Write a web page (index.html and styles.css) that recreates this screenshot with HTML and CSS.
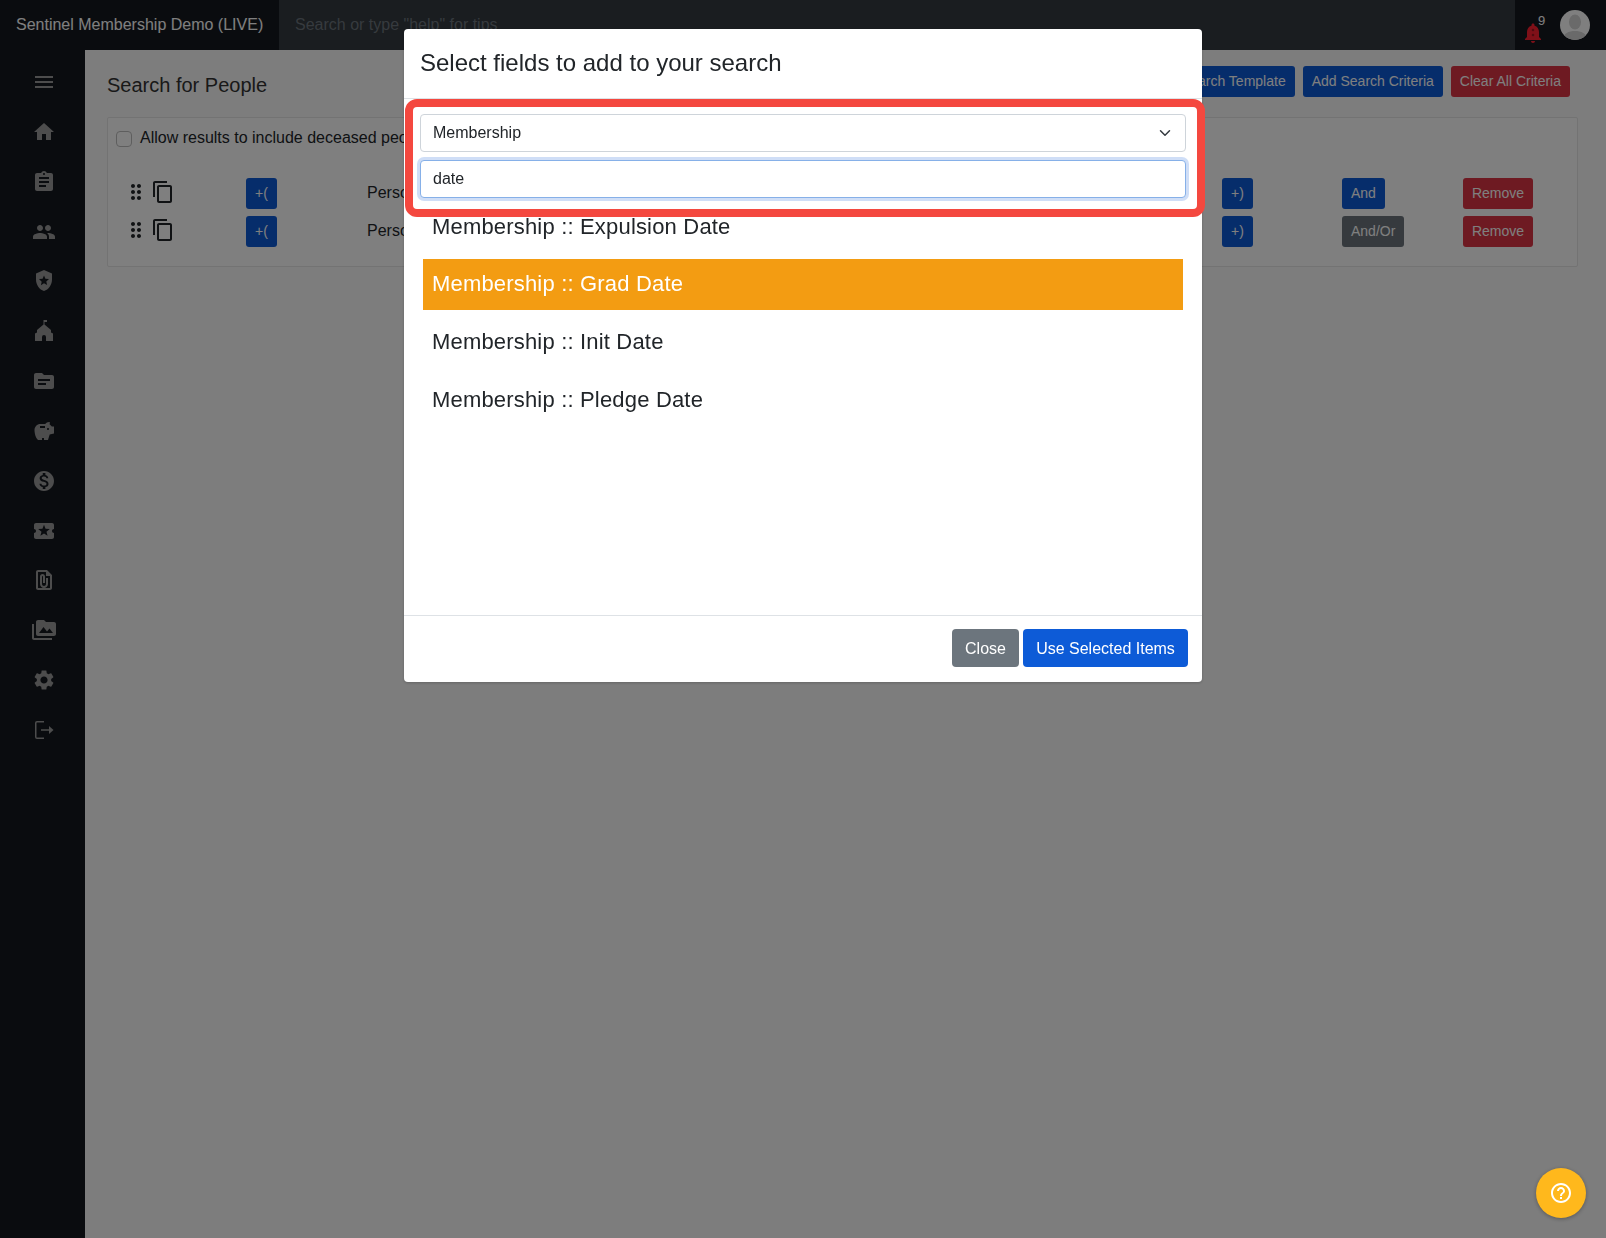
FILE: index.html
```html
<!DOCTYPE html>
<html lang="en">
<head>
<meta charset="utf-8">
<title>Search for People</title>
<link rel="stylesheet" href="styles.css">
</head>
<body>
<div class="app">
  <header class="topbar">
    <div class="brand">Sentinel Membership Demo (LIVE)</div>
    <div class="search">Search or type "help" for tips</div>
    <div class="user">
      <span class="bell">
        <svg viewBox="0 0 24 24" class="bell-icon"><path d="M12 22c1.100 0 2-.9 2-2h-4c0 1.100.9 2 2 2zm6-6v-5c0-3.070-1.630-5.640-4.500-6.320V4c0-.83-.67-1.500-1.500-1.500s-1.500.67-1.500 1.500v.68C7.640 5.360 6 7.920 6 11v5l-2 2v1h16v-1l-2-2z"/><circle class="bell-dot" cx="12" cy="9" r="1.300"/><circle class="bell-dot" cx="12" cy="14" r="1.300"/></svg>
        <span class="bell-count">9</span>
      </span>
      <svg viewBox="0 0 30 30" class="avatar"><circle cx="15" cy="15" r="15" fill="#fff"/><clipPath id="av"><circle cx="15" cy="15" r="15"/></clipPath><g clip-path="url(#av)" fill="#d4d4d4"><ellipse cx="15" cy="12" rx="6" ry="7.500"/><path d="M3 30c0-7 6-9 12-9s12 2 12 9z"/></g></svg>
    </div>
  </header>
  <div class="body">
    <nav class="sidebar">
      <svg viewBox="0 0 24 24"><path d="M3 18h18v-2H3v2zm0-5h18v-2H3v2zm0-7v2h18V6H3z"/></svg>
      <svg viewBox="0 0 24 24"><path d="M10 20v-6h4v6h5v-8h3L12 3 2 12h3v8z"/></svg>
      <svg viewBox="0 0 24 24"><path d="M19 3h-4.180C14.400 1.840 13.300 1 12 1c-1.300 0-2.400.84-2.820 2H5c-1.100 0-2 .9-2 2v14c0 1.100.9 2 2 2h14c1.100 0 2-.9 2-2V5c0-1.100-.9-2-2-2zm-7 0c.55 0 1 .45 1 1s-.45 1-1 1-1-.45-1-1 .45-1 1-1zm2 14H7v-2h7v2zm3-4H7v-2h10v2zm0-4H7V7h10v2z"/></svg>
      <svg viewBox="0 0 24 24"><path d="M16 11c1.660 0 2.990-1.340 2.990-3S17.660 5 16 5c-1.660 0-3 1.340-3 3s1.340 3 3 3zm-8 0c1.660 0 2.990-1.340 2.990-3S9.660 5 8 5C6.340 5 5 6.340 5 8s1.340 3 3 3zm0 2c-2.330 0-7 1.170-7 3.500V19h14v-2.500c0-2.330-4.670-3.500-7-3.500zm8 0c-.29 0-.62.02-.97.05 1.160.84 1.970 1.970 1.970 3.450V19h6v-2.500c0-2.330-4.670-3.500-7-3.500z"/></svg>
      <svg viewBox="0 0 24 24"><path fill-rule="evenodd" d="M12 1 4 4.500v6c0 5.300 3.400 10.200 8 11.500 4.600-1.300 8-6.200 8-11.500v-6zm0 5.500 1.400 3.300 3.600.3-2.700 2.400.8 3.500L12 14.300l-3.100 1.900.8-3.500L7 10.100l3.600-.3z"/></svg>
      <svg viewBox="0 0 24 24"><path d="M11.500 1H15v2h-2.500v2.500L19 11v2.500l2 1V22h-7v-4a2 2 0 0 0-4 0v4H3v-7.500l2-1V11l6.500-5.500z"/></svg>
      <svg viewBox="0 0 24 24"><path d="M20 6h-8l-2-2H4c-1.100 0-1.990.9-1.990 2L2 18c0 1.100.9 2 2 2h16c1.100 0 2-.9 2-2V8c0-1.100-.9-2-2-2zm-6 10H6v-2h8v2zm4-4H6v-2h12v2z"/></svg>
      <svg viewBox="0 0 24 24"><path d="M19.830 7.500l-2.270-2.270c.07-.42.18-.81.32-1.150C18.040 3.710 17.750 3 17.140 3c-1.600 0-3.020.79-3.890 2H8.250C5.190 5 2.500 7.690 2.500 11c0 3 1.100 8 3.500 10h4v-2h2v2h4l1.680-5.590L22 14.470V7.500h-2.170zM13 9H8V7h5v2zm3 2c-.55 0-1-.45-1-1s.45-1 1-1 1 .45 1 1-.45 1-1 1z"/></svg>
      <svg viewBox="0 0 24 24"><path d="M12 2C6.480 2 2 6.480 2 12s4.480 10 10 10 10-4.480 10-10S17.520 2 12 2zm1.410 16.090V20h-2.670v-1.930c-1.710-.36-3.160-1.460-3.270-3.400h1.960c.1 1.050.82 1.870 2.650 1.870 1.960 0 2.400-.98 2.400-1.590 0-.83-.44-1.610-2.670-2.140-2.480-.6-4.180-1.620-4.180-3.670 0-1.720 1.390-2.840 3.110-3.210V4h2.670v1.950c1.860.45 2.790 1.860 2.850 3.390H14.300c-.05-1.110-.64-1.870-2.220-1.870-1.500 0-2.400.68-2.400 1.640 0 .84.65 1.390 2.670 1.910s4.180 1.390 4.180 3.910c-.01 1.830-1.380 2.830-3.120 3.160z"/></svg>
      <svg viewBox="0 0 24 24"><path d="M20 12c0-1.100.9-2 2-2V6c0-1.100-.9-2-2-2H4c-1.100 0-1.990.9-1.990 2v4c1.100 0 1.990.9 1.990 2s-.89 2-2 2v4c0 1.100.9 2 2 2h16c1.100 0 2-.9 2-2v-4c-1.100 0-2-.9-2-2zm-4.420 4.800L12 14.500l-3.580 2.300 1.080-4.120-3.290-2.690 4.240-.25L12 5.800l1.540 3.950 4.240.25-3.290 2.690 1.090 4.110z"/></svg>
      <svg viewBox="0 0 24 24"><path d="M15 2H6c-1.100 0-2 .9-2 2v16c0 1.100.9 2 2 2h12c1.100 0 2-.9 2-2V7l-5-5zM6 20V4h8v4h4v12H6z"/><path d="M16 10v6c0 2.210-1.790 4-4 4s-4-1.790-4-4V8.500C8 7.120 9.120 6 10.500 6S13 7.120 13 8.500V15h-2V8.500c0-.28-.22-.5-.5-.5s-.5.22-.5.5V16c0 1.100.9 2 2 2s2-.9 2-2v-6h2z"/></svg>
      <svg viewBox="0 0 24 24"><path d="M2 6H0v5h.01L0 20c0 1.100.9 2 2 2h18v-2H2V6zm20-2h-8l-2-2H6c-1.100 0-1.990.9-1.990 2L4 16c0 1.100.9 2 2 2h16c1.100 0 2-.9 2-2V6c0-1.100-.9-2-2-2zM7 15l4.500-6 3.500 4.510 2.500-3.010L21 15H7z"/></svg>
      <svg viewBox="0 0 24 24"><path d="M19.140 12.940c.04-.3.06-.61.06-.94 0-.32-.02-.64-.07-.94l2.030-1.580c.18-.14.23-.41.12-.61l-1.920-3.320c-.12-.22-.37-.29-.59-.22l-2.390.96c-.5-.38-1.030-.7-1.620-.94l-.36-2.540c-.04-.24-.24-.41-.48-.41h-3.840c-.24 0-.43.17-.47.41l-.36 2.540c-.59.24-1.130.57-1.620.94l-2.390-.96c-.22-.08-.47 0-.59.22L2.740 8.870c-.12.21-.08.47.12.61l2.030 1.580c-.05.3-.09.63-.09.94s.02.64.07.94l-2.030 1.580c-.18.14-.23.41-.12.61l1.920 3.320c.12.22.37.29.59.22l2.390-.96c.5.38 1.030.7 1.620.94l.36 2.540c.05.24.24.41.48.41h3.840c.24 0 .44-.17.47-.41l.36-2.540c.59-.24 1.130-.56 1.620-.94l2.390.96c.22.08.47 0 .59-.22l1.920-3.320c.12-.22.07-.47-.12-.61l-2.010-1.580zM12 15.600c-1.980 0-3.600-1.620-3.600-3.600s1.620-3.600 3.600-3.600 3.600 1.620 3.600 3.600-1.620 3.600-3.600 3.600z"/></svg>
      <svg viewBox="0 0 24 24"><path d="M5 3h7v1.500H5a.5.5 0 0 0-.5.5v14a.5.5 0 0 0 .5.5h7V21H5a2 2 0 0 1-2-2V5a2 2 0 0 1 2-2zm12 5 4.500 4-4.500 4v-3.200H9v-1.600h8z"/></svg>
    </nav>
    <main class="main">
      <div class="page-head">
        <h1 class="page-title">Search for People</h1>
        <div class="actions">
          <button class="btn blue">Load Search Template</button>
          <button class="btn blue">Add Search Criteria</button>
          <button class="btn red">Clear All Criteria</button>
        </div>
      </div>
      <section class="panel">
        <label class="deceased"><span class="check"></span>Allow results to include deceased people</label>
        <div class="row">
          <div class="handles">
            <svg viewBox="0 0 24 24" class="drag"><path d="M11 18c0 1.100-.9 2-2 2s-2-.9-2-2 .9-2 2-2 2 .9 2 2zm-2-8c-1.100 0-2 .9-2 2s.9 2 2 2 2-.9 2-2-.9-2-2-2zm0-6c-1.100 0-2 .9-2 2s.9 2 2 2 2-.9 2-2-.9-2-2-2zm6 4c1.100 0 2-.9 2-2s-.9-2-2-2-2 .9-2 2 .9 2 2 2zm0 2c-1.100 0-2 .9-2 2s.9 2 2 2 2-.9 2-2-.9-2-2-2zm0 6c-1.100 0-2 .9-2 2s.9 2 2 2 2-.9 2-2-.9-2-2-2z"/></svg>
            <svg viewBox="0 0 24 24" class="copy"><path d="M16 1H4c-1.100 0-2 .9-2 2v14h2V3h12V1zm3 4H8c-1.100 0-2 .9-2 2v14c0 1.100.9 2 2 2h11c1.100 0 2-.9 2-2V7c0-1.100-.9-2-2-2zm0 16H8V7h11v14z"/></svg>
          </div>
          <button class="btn blue">+(</button>
          <span class="field">Person</span>
          <button class="btn blue">+)</button>
          <div><button class="btn blue">And</button></div>
          <button class="btn red wide">Remove</button>
        </div>
        <div class="row">
          <div class="handles">
            <svg viewBox="0 0 24 24" class="drag"><path d="M11 18c0 1.100-.9 2-2 2s-2-.9-2-2 .9-2 2-2 2 .9 2 2zm-2-8c-1.100 0-2 .9-2 2s.9 2 2 2 2-.9 2-2-.9-2-2-2zm0-6c-1.100 0-2 .9-2 2s.9 2 2 2 2-.9 2-2-.9-2-2-2zm6 4c1.100 0 2-.9 2-2s-.9-2-2-2-2 .9-2 2 .9 2 2 2zm0 2c-1.100 0-2 .9-2 2s.9 2 2 2 2-.9 2-2-.9-2-2-2zm0 6c-1.100 0-2 .9-2 2s.9 2 2 2 2-.9 2-2-.9-2-2-2z"/></svg>
            <svg viewBox="0 0 24 24" class="copy"><path d="M16 1H4c-1.100 0-2 .9-2 2v14h2V3h12V1zm3 4H8c-1.100 0-2 .9-2 2v14c0 1.100.9 2 2 2h11c1.100 0 2-.9 2-2V7c0-1.100-.9-2-2-2zm0 16H8V7h11v14z"/></svg>
          </div>
          <button class="btn blue">+(</button>
          <span class="field">Person</span>
          <button class="btn blue">+)</button>
          <div><button class="btn slate">And/Or</button></div>
          <button class="btn red wide">Remove</button>
        </div>
      </section>
    </main>
  </div>
</div>

<div class="backdrop"></div>

<div class="modal">
  <h2 class="modal-title">Select fields to add to your search</h2>
  <div class="modal-body">
    <div class="select">Membership
      <svg viewBox="0 0 16 16" class="chevron"><path d="M2 5l6 6 6-6" fill="none" stroke="#343a40" stroke-width="2" stroke-linecap="round" stroke-linejoin="round"/></svg>
    </div>
    <div class="input">date</div>
    <ul class="options">
      <li>Membership :: Expulsion Date</li>
      <li class="selected">Membership :: Grad Date</li>
      <li>Membership :: Init Date</li>
      <li>Membership :: Pledge Date</li>
    </ul>
  </div>
  <div class="modal-footer">
    <button class="btn m-close">Close</button>
    <button class="btn m-use">Use Selected Items</button>
  </div>
  <div class="highlight"></div>
</div>

<div class="fab">
  <svg viewBox="0 0 24 24"><path d="M11 18h2v-2h-2v2zm1-16C6.480 2 2 6.480 2 12s4.480 10 10 10 10-4.480 10-10S17.520 2 12 2zm0 18c-4.410 0-8-3.590-8-8s3.590-8 8-8 8 3.590 8 8-3.590 8-8 8zm0-14c-2.210 0-4 1.790-4 4h2c0-1.100.9-2 2-2s2 .9 2 2c0 2-3 1.750-3 5h2c0-2.250 3-2.500 3-5 0-2.210-1.790-4-4-4z"/></svg>
</div>
</body>
</html>
```
FILE: styles.css
```css
* { box-sizing: border-box; }
html, body { height: 100%; }
body {
  margin: 0;
  overflow: hidden;
  font-family: "Liberation Sans", Arial, sans-serif;
  font-size: 16px;
  color: #212529;
  background: #fff;
}
.app { display: flex; flex-direction: column; height: 1238px; }

.topbar { display: flex; height: 50px; background: #15191f; flex: none; }
.brand { width: 279px; padding-left: 16px; line-height: 50px; color: #fff; font-size: 16px; white-space: nowrap; }
.search { flex: 1; background: #343a40; padding-left: 16px; line-height: 50px; color: #6c757d; font-size: 16px; }
.user { width: 91px; display: flex; align-items: center; padding-left: 6px; gap: 15px; }
.bell { position: relative; display: block; width: 24px; height: 24px; margin-top: 16px; }
.bell-icon { width: 24px; height: 24px; fill: #ff2030; display: block; }
.bell-dot { fill: #a01520; }
.bell-count { position: absolute; left: 17px; top: -8px; font-size: 13px; color: #fff; }
.avatar { width: 30px; height: 30px; display: block; }

.body { display: flex; flex: 1; min-height: 0; }
.sidebar {
  width: 85px; flex: none; background: #15191f;
  display: flex; flex-direction: column; align-items: center;
  padding: 20px 0 0 2px; gap: 25.85px;
}
.sidebar svg { width: 24px; height: 24px; fill: #9a9a9a; display: block; }

.main { flex: 1; padding: 16px 28px 0 22px; background: #fbfbfb; }
.page-head { display: flex; justify-content: space-between; align-items: center; height: 31px; padding-right: 8px; }
.page-title { margin: 8px 0 0; font-size: 20px; font-weight: 400; color: #333; }
.actions { display: flex; gap: 8px; }
.btn {
  font-family: inherit; font-size: 14px; line-height: 21px;
  padding: 4px 8px; height: 31px; border: 1px solid transparent; border-radius: 3px;
  color: #fff; white-space: nowrap;
}
.blue { background: #0d5bd7; }
.red { background: #dc3545; }
.slate { background: #6c757d; }
.wide { width: 70px; padding: 0; }

.panel {
  margin-top: 20px; height: 150px; padding: 12px 8px;
  background: #fff; border: 1px solid #e6e6e6; border-radius: 2px;
}
.deceased { display: flex; align-items: center; gap: 8px; height: 16px; font-size: 16px; white-space: nowrap; }
.check { width: 16px; height: 16px; margin-top: 1px; border: 1px solid #bdbdbd; border-radius: 4px; background: #fff; flex: none; }
.row {
  display: grid;
  grid-template-columns: 130px 121px 855px 120px 121px auto;
  align-items: center;
  justify-items: start;
  height: 38px;
}
.panel .row:first-of-type { margin-top: 28px; }
.handles { display: flex; align-items: center; padding: 0 0 3px 8px; gap: 6px; }
.drag { width: 24px; height: 24px; fill: #212529; }
.copy { width: 24px; height: 24px; fill: #212529; margin-left: -3px; }
.field { font-size: 16px; }

.backdrop { position: fixed; inset: 0; background: rgba(0, 0, 0, .5); }

.modal {
  position: fixed; left: 404px; top: 29px; width: 798px; height: 653px;
  background: #fff; border-radius: 4px;
  display: flex; flex-direction: column;
  box-shadow: 0 1px 3px rgba(0,0,0,.2);
}
.modal-title {
  margin: 0; flex: none; height: 70px; padding: 18px 16px 0;
  font-size: 24px; font-weight: 400; line-height: 32px; color: #212529;
  border-bottom: 1px solid #dee2e6;
}
.modal-body { flex: 1; padding: 15px 16px 0; min-height: 0; }
.select, .input {
  height: 38px; border: 1px solid #ced4da; border-radius: 4px;
  padding: 0 12px; line-height: 36px; font-size: 16px; color: #212529; background: #fff;
  position: relative;
}
.input { margin-top: 8px; border-color: #86b0e8; box-shadow: 0 0 0 3px rgba(13,91,215,.2); }
.chevron { position: absolute; right: 14px; top: 12px; width: 12px; height: 12px; }
.options { list-style: none; margin: 3px 3px 0; padding: 0; }
.options li {
  height: 51px; margin-bottom: 6.7px; padding-left: 9px;
  font-size: 22px; line-height: 51px; letter-spacing: .18px; color: #212529;
}
.options li.selected { background: #f39c12; color: #fff; line-height: 50px; }
.modal-footer {
  flex: none; height: 67px; border-top: 1px solid #dee2e6;
  display: flex; justify-content: flex-end; align-items: flex-start; gap: 4px;
  padding: 13px 14px 0;
}
.m-close { height: 38px; width: 67px; background: #6c757d; font-size: 16px; padding: 0; border-radius: 4px; }
.m-use { height: 38px; width: 165px; background: #0d5bd7; font-size: 16px; padding: 0; border-radius: 4px; }
.highlight {
  position: absolute; left: 1px; top: 70px; width: 800px; height: 118px;
  border: 8px solid #f4483f; border-radius: 12px; pointer-events: none;
}

.fab {
  position: fixed; left: 1536px; top: 1168px; width: 50px; height: 50px;
  border-radius: 50%; background: #ffb81c;
  display: flex; align-items: center; justify-content: center;
  box-shadow: 0 1px 4px rgba(0,0,0,.3);
}
.fab svg { width: 24px; height: 24px; fill: #fff; }
```
